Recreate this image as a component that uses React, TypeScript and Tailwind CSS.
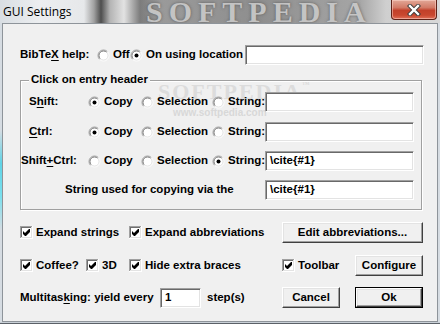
import React from "react";

const SANS = { fontFamily: '"Liberation Sans", Arial, sans-serif' };

function Radio({ checked }: { checked?: boolean }) {
  return (
    <svg width="13" height="13" viewBox="0 0 13 13" className="shrink-0">
      <circle cx="6.5" cy="6.5" r="5" fill="#ffffff" />
      <path d="M2.6 10.4 A5.5 5.5 0 0 1 10.4 2.6" fill="none" stroke="#a0a0a0" strokeWidth="1" />
      <path d="M10.4 2.6 A5.5 5.5 0 0 1 2.6 10.4" fill="none" stroke="#ffffff" strokeWidth="1" />
      <path d="M3.3 9.7 A4.5 4.5 0 0 1 9.7 3.3" fill="none" stroke="#7a7a7a" strokeWidth="1" />
      <path d="M9.7 3.3 A4.5 4.5 0 0 1 3.3 9.7" fill="none" stroke="#e3e3e3" strokeWidth="1" />
      {checked && <circle cx="6.5" cy="6.5" r="2" fill="#000000" />}
    </svg>
  );
}

function Check() {
  return (
    <svg width="13" height="13" viewBox="0 0 13 13" className="shrink-0">
      <g shapeRendering="crispEdges">
        <rect x="0" y="0" width="13" height="13" fill="#ffffff" />
        <path d="M0 0.5H12.5 M0.5 0V12.5" stroke="#a0a0a0" />
        <path d="M0 12.5H13 M12.5 0V13" stroke="#ffffff" />
        <path d="M1 1.5H11.5 M1.5 1V11.5" stroke="#6f6f6f" />
        <path d="M1 11.5H12 M11.5 1V12" stroke="#e3e3e3" />
      </g>
      <path d="M3 5 L5 7 L9 3 L10 3 L10 6 L6 10 L5 10 L3 8 Z" fill="#000000" />
    </svg>
  );
}

function Input({ w, value }: { w: string; value?: string }) {
  return (
    <div
      className={`${w} h-[20px] shrink-0 bg-white border border-t-[#a0a0a0] border-l-[#a0a0a0] border-b-white border-r-white shadow-[inset_1px_1px_0_#696969,inset_-1px_-1px_0_#e3e3e3] flex items-center pl-[4px] text-[11.5px] font-bold text-black leading-none`}
    >
      {value}
    </div>
  );
}

function Button({ w, children, def }: { w: string; children: React.ReactNode; def?: boolean }) {
  const inner = (
    <div className="w-full h-full bg-[#f0f0f0] border border-t-white border-l-white border-r-[#404040] border-b-[#404040] shadow-[inset_-1px_-1px_0_#a0a0a0,inset_1px_1px_0_#e3e3e3] flex items-center justify-center text-[11.5px] font-bold text-black leading-none">
      {children}
    </div>
  );
  if (def) {
    return <div className={`${w} h-[21px] shrink-0 border border-black`}>{inner}</div>;
  }
  return <div className={`${w} h-[21px] shrink-0`}>{inner}</div>;
}

function RadioOpt({ w, checked, label }: { w: string; checked?: boolean; label: React.ReactNode }) {
  return (
    <div className={`${w} shrink-0 flex items-center`}>
      <Radio checked={checked} />
      <span className="ml-[3px] whitespace-nowrap">{label}</span>
    </div>
  );
}

function CheckOpt({ w, label }: { w: string; label: React.ReactNode }) {
  return (
    <div className={`${w} shrink-0 flex items-center`}>
      <Check />
      <span className="ml-[3px] whitespace-nowrap">{label}</span>
    </div>
  );
}

function GroupRow({
  label,
  pad,
  sel,
  value,
  mt,
}: {
  label: React.ReactNode;
  pad: string;
  sel: number;
  value?: string;
  mt: string;
}) {
  return (
    <div className={`${mt} relative h-[20px] flex items-center`}>
      <div className={`w-[67px] shrink-0 ${pad} whitespace-nowrap`}>{label}</div>
      <RadioOpt w="w-[53px]" checked={sel === 0} label="Copy" />
      <RadioOpt w="w-[71px]" checked={sel === 1} label="Selection" />
      <RadioOpt w="w-[53px]" checked={sel === 2} label="String:" />
      <Input w="w-[149px]" value={value} />
    </div>
  );
}

export default function App() {
  return (
    <div className="relative w-[440px] h-[324px] overflow-hidden bg-[#d6dce2]" style={SANS}>
      {/* left frame glow */}
      <div className="absolute left-0 top-[130px] w-[2px] h-[100px] bg-[linear-gradient(180deg,transparent,#5fd3e6,#7be0ee,transparent)]" />

      {/* title bar */}
      <div className="relative h-[23px] flex items-start bg-[linear-gradient(90deg,#d9dee3_0px,#eceef0_40px,#e6e8ea_84px,#a0a0a0_94px,#4e4e4e_101px,#b4b4b4_110px,#e2e2e2_124px,#7c7c7c_140px,#9a9a9a_160px,#8e8e8e_260px,#a6a6a6_360px,#cfcfcf_386px,#d8d8d8_440px)]">
        <div
          className="absolute left-[146px] top-[-3px] text-[30px] font-bold tracking-[6px] text-[#c9c9c9] leading-none whitespace-nowrap [text-shadow:0_0_3px_#555555] opacity-90"
          style={{ fontFamily: '"Liberation Serif", "Times New Roman", serif' }}
        >
          SOFTPEDIA
        </div>
        <div
          className="relative h-[23px] pl-[3px] flex items-center text-[12px] text-black leading-none"
          style={{ fontFamily: '"Open Sans", "Noto Sans", sans-serif' }}
        >
          GUI Settings
        </div>
        <div className="relative ml-auto mr-[3px] w-[46px] h-[20px] rounded-b-[4px] border border-t-0 border-[#5e2218] bg-[linear-gradient(180deg,#e2a898_0%,#d27a66_40%,#c2402a_55%,#c9482f_80%,#e0705a_100%)] shadow-[inset_0_0_0_1px_rgba(255,220,210,0.5)] flex items-center justify-center">
          <svg width="14" height="12" viewBox="0 0 14 12">
            <path d="M3 2 L11 10 M11 2 L3 10" stroke="#3a3a3a" strokeWidth="4.2" strokeLinecap="square" />
            <path d="M3 2 L11 10 M11 2 L3 10" stroke="#ffffff" strokeWidth="2.4" strokeLinecap="square" />
          </svg>
        </div>
      </div>

      {/* client area */}
      <div className="relative mx-[2px] h-[299px] border border-[#8e949a] bg-[#f0f0f0] px-[17px] text-[11.5px] font-bold text-black leading-none">
        {/* watermark */}
        <div
          className="absolute left-[155px] top-[57px] text-[22px] tracking-[2px] text-[#dcdcdc] leading-none pointer-events-none whitespace-nowrap"
          style={{ fontFamily: '"Liberation Serif", serif' }}
        >
          SOFTPEDIA<span className="text-[8px] align-top">™</span>
        </div>
        <div
          className="absolute left-[170px] top-[84px] text-[10px] text-[#d8d8d8] leading-none pointer-events-none whitespace-nowrap"
          style={{ fontFamily: '"Liberation Sans", sans-serif' }}
        >
          www.softpedia.com
        </div>

        {/* BibTeX row */}
        <div className="relative mt-[21px] h-[20px] flex items-center">
          <div className="w-[77px] shrink-0 whitespace-nowrap">
            BibTe<span className="underline underline-offset-2">X</span> help:
          </div>
          <RadioOpt w="w-[33px]" label="Off" />
          <RadioOpt w="w-[115px]" checked label="On using location" />
          <Input w="w-[179px]" />
        </div>

        {/* group box */}
        <div className="relative mt-[15px] w-[402px] h-[130px] border border-[#a0a0a0] shadow-[1px_1px_0_#ffffff,inset_1px_1px_0_#ffffff]">
          <div className="absolute left-[8px] top-[-7px] bg-[#f0f0f0] px-[2px] whitespace-nowrap">
            Click on entry header
          </div>
          <div className="pt-[11px]">
            <GroupRow
              mt="mt-0"
              pad="pl-[8px]"
              sel={0}
              label={
                <>
                  S<span className="underline underline-offset-2">h</span>ift:
                </>
              }
            />
            <GroupRow
              mt="mt-[10px]"
              pad="pl-[8px]"
              sel={0}
              label={
                <>
                  <span className="underline underline-offset-2">C</span>trl:
                </>
              }
            />
            <GroupRow
              mt="mt-[9px]"
              pad="pl-0"
              sel={2}
              value="\cite{#1}"
              label={
                <>
                  Shift<span className="underline underline-offset-2">+</span>Ctrl:
                </>
              }
            />
            <div className="mt-[9px] h-[20px] flex items-center">
              <div className="w-[244px] shrink-0 pl-[44px] whitespace-nowrap">String used for copying via the</div>
              <Input w="w-[149px]" value="\cite{#1}" />
            </div>
          </div>
        </div>

        {/* checkbox row 1 */}
        <div className="relative mt-[12px] h-[21px] flex items-center">
          <CheckOpt w="w-[109px]" label="Expand strings" />
          <CheckOpt w="w-[153px]" label="Expand abbreviations" />
          <Button w="w-[141px]">Edit abbreviations...</Button>
        </div>

        {/* checkbox row 2 */}
        <div className="relative mt-[12px] h-[21px] flex items-center">
          <CheckOpt w="w-[66px]" label="Coffee?" />
          <CheckOpt w="w-[43px]" label="3D" />
          <CheckOpt w="w-[153px]" label="Hide extra braces" />
          <CheckOpt w="w-[73px]" label="Toolbar" />
          <Button w="w-[68px]">Configure</Button>
        </div>

        {/* multitasking row */}
        <div className="relative mt-[11px] h-[21px] flex items-center">
          <div className="w-[140px] shrink-0 whitespace-nowrap">
            Multitas<span className="underline underline-offset-2">k</span>ing: yield every
          </div>
          <Input w="w-[41px]" value="1" />
          <div className="w-[81px] shrink-0 pl-[6px] whitespace-nowrap">step(s)</div>
          <Button w="w-[58px]">Cancel</Button>
          <div className="w-[15px] shrink-0" />
          <Button w="w-[68px]" def>
            Ok
          </Button>
        </div>
      </div>
      <div className="h-[1px] bg-[#c9d0d7]" />
      <div className="h-[1px] bg-[#5b6168]" />
    </div>
  );
}
